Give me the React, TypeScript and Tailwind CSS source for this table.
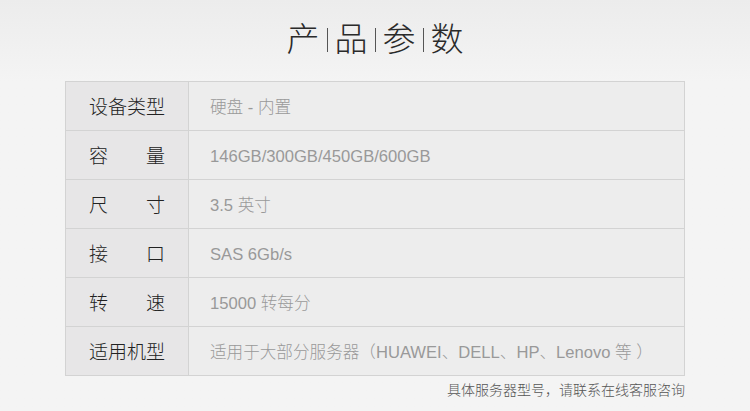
import React from 'react';

const rows: { label: string[]; value: string }[] = [
  { label: ['设备类型'], value: '硬盘 - 内置' },
  { label: ['容', '量'], value: '146GB/300GB/450GB/600GB' },
  { label: ['尺', '寸'], value: '3.5 英寸' },
  { label: ['接', '口'], value: 'SAS 6Gb/s' },
  { label: ['转', '速'], value: '15000 转每分' },
  { label: ['适用机型'], value: '适用于大部分服务器（HUAWEI、DELL、HP、Lenovo 等 ）' },
];

const font = { fontFamily: '"Liberation Sans", "Noto Sans CJK SC", sans-serif' };

export default function App() {
  const title = ['产', '品', '参', '数'];
  return (
    <div className="w-[750px] h-[411px] bg-gradient-to-b from-[#ececec] to-[#f4f4f4] to-[20%] overflow-hidden" style={font}>
      {/* title */}
      <div className="h-[81px] flex items-center justify-center pb-[2px]">
        {title.map((c, i) => (
          <React.Fragment key={c}>
            {i > 0 && <span className="w-px h-[24px] bg-[#555] mx-[7px]" />}
            <span className="text-[33px] leading-none font-light text-[#2a2a2a]">{c}</span>
          </React.Fragment>
        ))}
      </div>

      {/* table */}
      <div className="mx-[65px] border border-[#d3d3d3]">
        {rows.map((r, i) => (
          <div key={i} className={i > 0 ? 'flex h-[49px] border-t border-[#d3d3d3]' : 'flex h-[48px]'}>
            <div className="w-[123px] bg-[#e7e6e7] border-r border-[#d3d3d3] flex items-center pl-[23px] pt-[4px]">
              {r.label.length === 1 ? (
                <span className="text-[19px] font-light text-[#222]">{r.label[0]}</span>
              ) : (
                <span className="w-[76px] flex justify-between text-[19px] font-light text-[#222]">
                  <span>{r.label[0]}</span>
                  <span>{r.label[1]}</span>
                </span>
              )}
            </div>
            <div className="flex-1 bg-[#ededed] flex items-center pl-[21px] pt-[4px] text-[16.6px] font-light text-[#999]">
              {r.value}
            </div>
          </div>
        ))}
      </div>

      <div className="mx-[65px] text-right text-[14px] font-light text-[#555] mt-[4px]">
        具体服务器型号，请联系在线客服咨询
      </div>
    </div>
  );
}
